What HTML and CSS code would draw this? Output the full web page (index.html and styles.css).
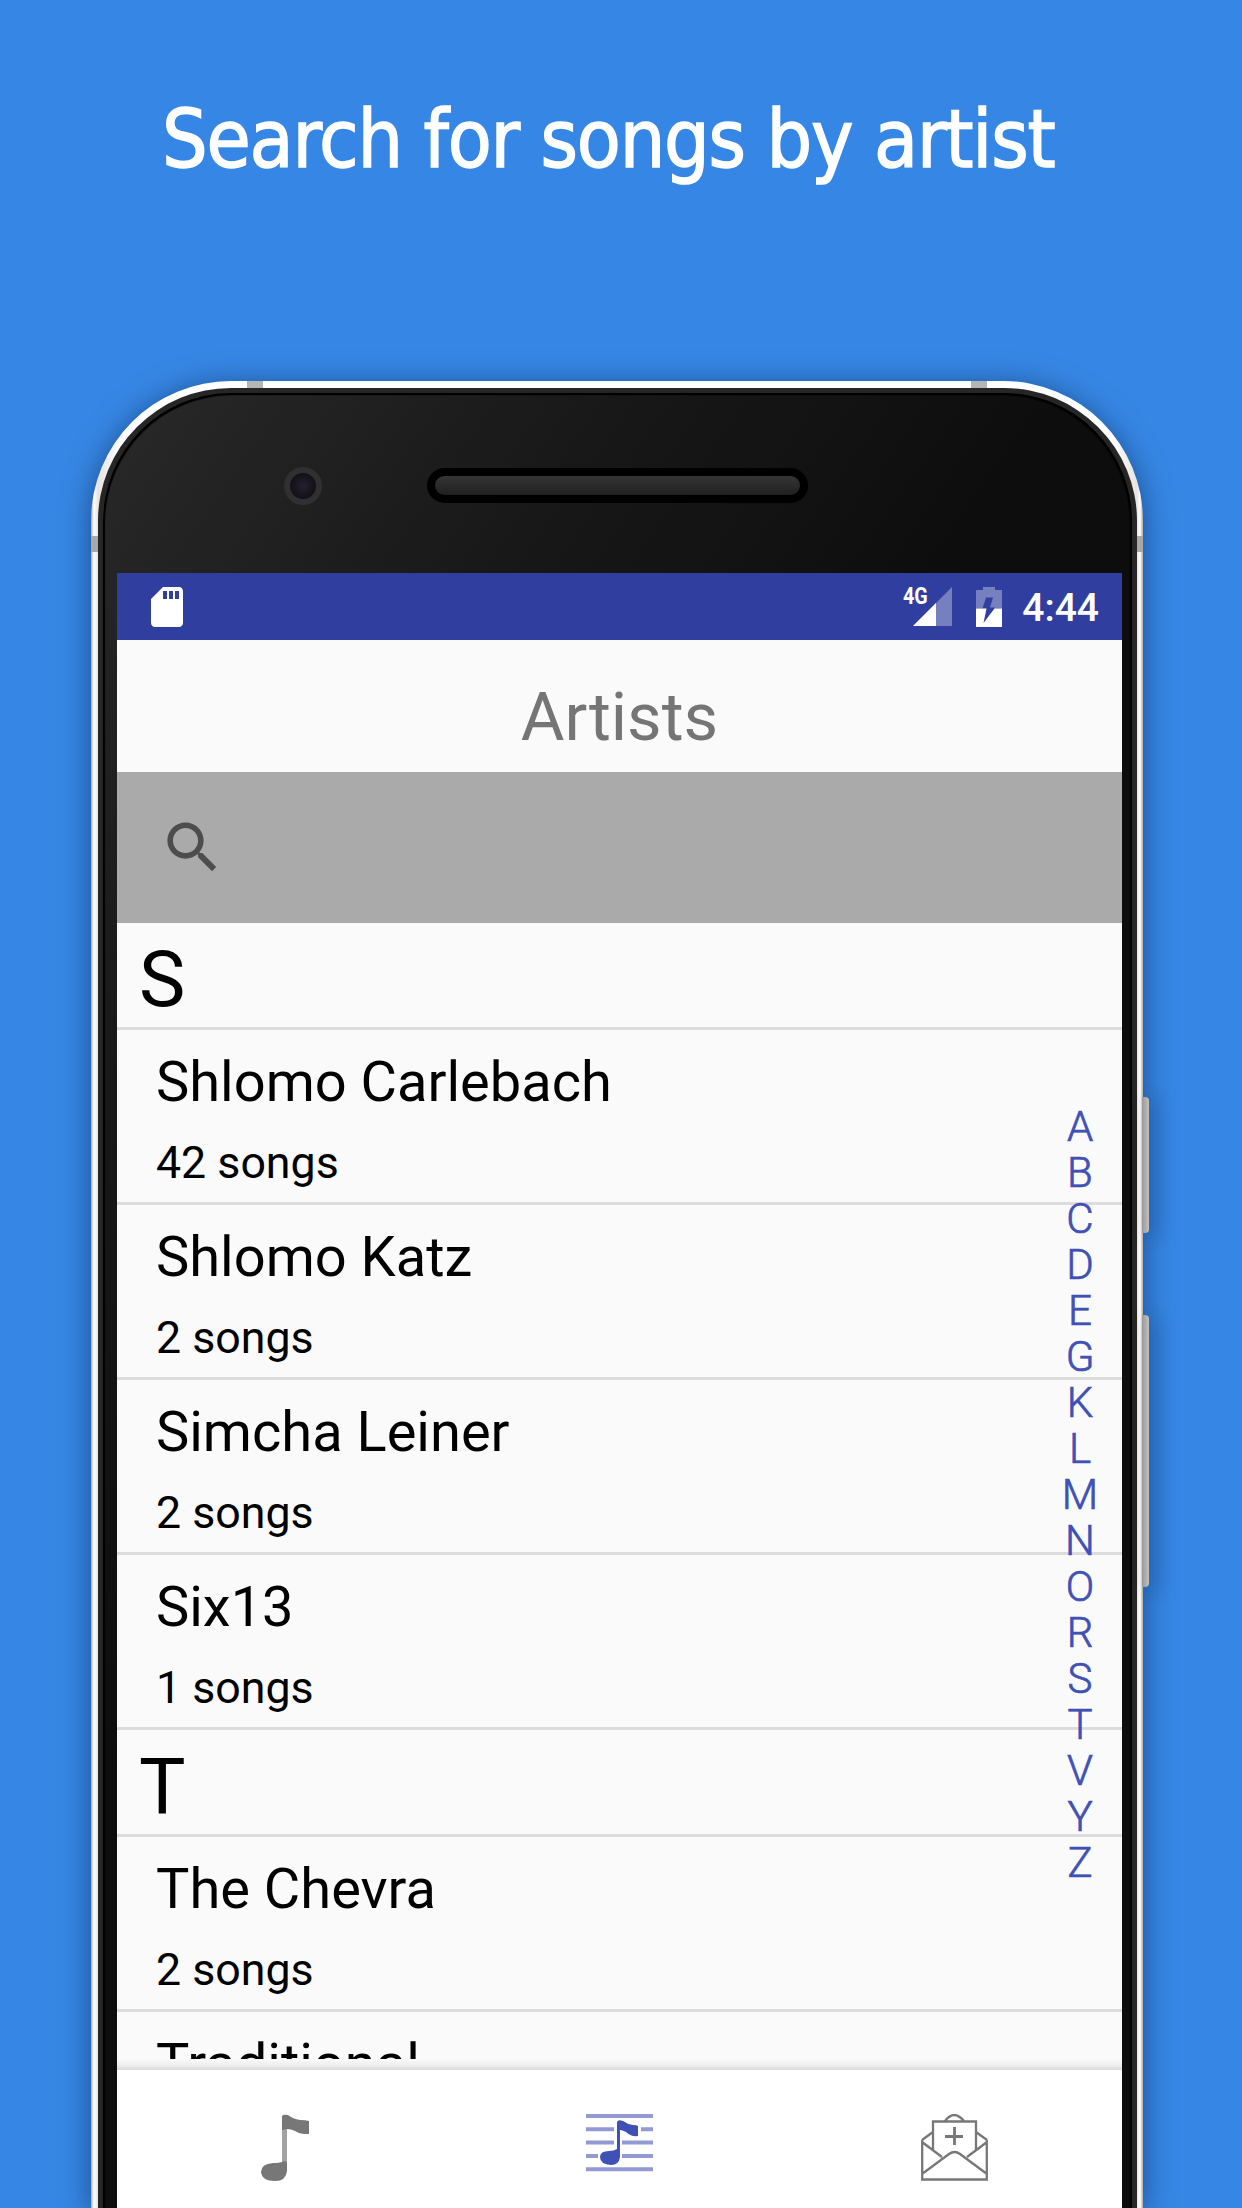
FILE: index.html
```html
<!DOCTYPE html>
<html lang="en">
<head>
    <meta charset="UTF-8">
    <meta name="viewport" content="width=device-width, initial-scale=1.0">
    <title>Search for songs by artist</title>
    <link rel="stylesheet" href="styles.css">
</head>
<body>
    <h1 class="headline">Search for songs by artist</h1>

    <div class="phone">
        <div class="side-button power"></div>
        <div class="side-button volume"></div>

        <div class="bezel">
            <div class="bezel-top">
                <div class="camera"></div>
                <div class="earpiece"></div>
            </div>

            <div class="screen">
                <!-- Android status bar -->
                <div class="status-bar">
                    <svg class="sd-icon" viewBox="0 0 24 24"><path fill="#fff" d="M18 2h-8L4 8v12c0 1.100.9 2 2 2h12c1.100 0 2-.9 2-2V4c0-1.100-.9-2-2-2zm-6 6h-2V4h2v4zm3 0h-2V4h2v4zm3 0h-2V4h2v4z"/></svg>
                    <div class="signal">
                        <span class="network">4G</span>
                        <svg class="signal-icon" viewBox="0 0 39 39"><path fill="#fff" fill-opacity=".34" d="M39 0v39H0z"/><path fill="#fff" d="M23 16v23H0z"/></svg>
                    </div>
                    <svg class="battery-icon" viewBox="0 0 26 40">
                        <path fill="#fff" fill-opacity=".34" d="M7 0h12v3h7v18.500h-7.500l.5-1h-5l3-10H10L6.500 21.500H0V3h7z"/>
                        <path fill="#fff" d="M0 21.500h10.500L7.500 36 18.500 21.500H26V40H0z"/>
                    </svg>
                    <span class="clock">4:44</span>
                </div>

                <div class="title-bar">Artists</div>

                <div class="search-bar">
                    <svg class="search-icon" viewBox="0 0 24 24"><path fill="#4d4d4d" d="M15.500 14h-.79l-.28-.27C15.410 12.590 16 11.110 16 9.500 16 5.910 13.090 3 9.500 3S3 5.910 3 9.500 5.910 16 9.500 16c1.610 0 3.090-.59 4.230-1.570l.27.28v.79l5 4.990L20.490 19l-4.990-5zm-6 0C7.010 14 5 11.990 5 9.500S7.010 5 9.500 5 14 7.010 14 9.500 11.990 14 9.500 14z"/></svg>
                </div>

                <div class="list-area">
                    <div class="artist-list">
                        <div class="section">S</div>
                        <div class="artist">
                            <div class="artist-name">Shlomo Carlebach</div>
                            <div class="song-count">42 songs</div>
                        </div>
                        <div class="artist">
                            <div class="artist-name">Shlomo Katz</div>
                            <div class="song-count">2 songs</div>
                        </div>
                        <div class="artist">
                            <div class="artist-name">Simcha Leiner</div>
                            <div class="song-count">2 songs</div>
                        </div>
                        <div class="artist">
                            <div class="artist-name">Six13</div>
                            <div class="song-count">1 songs</div>
                        </div>
                        <div class="section">T</div>
                        <div class="artist">
                            <div class="artist-name">The Chevra</div>
                            <div class="song-count">2 songs</div>
                        </div>
                        <div class="artist">
                            <div class="artist-name">Traditional</div>
                        </div>
                    </div>

                    <div class="alphabet">
                        <span>A</span>
                        <span>B</span>
                        <span>C</span>
                        <span>D</span>
                        <span>E</span>
                        <span>G</span>
                        <span>K</span>
                        <span>L</span>
                        <span>M</span>
                        <span>N</span>
                        <span>O</span>
                        <span>R</span>
                        <span>S</span>
                        <span>T</span>
                        <span>V</span>
                        <span>Y</span>
                        <span>Z</span>
                    </div>
                </div>

                <div class="nav-shadow"></div>
                <div class="bottom-nav">
                    <div class="nav-item">
                        <svg viewBox="-10 0 67 67">
                            <path fill="#a3a3a3" d="M21 2h5v54h-5z"/>
                            <path fill="#777" d="M21 2q1-2 6-1 5 4 12 5 6 0 9 1v13h-5q-5 0-9-3-4-2-8-2l-5 1zM26 48v9q-1 10-12 10Q1 67 0 58q0-8 12-9 8 0 11-2z"/>
                        </svg>
                    </div>
                    <div class="nav-item">
                        <svg viewBox="0 0 67 67">
                            <path stroke="#9299d3" stroke-width="4" d="M0 2h67M0 15.300h28M55 15.300h12M0 28.600h28M36 28.600h31M0 42h12M36 42h31M0 55.300h67"/>
                            <path fill="#3f51b5" d="M31 8q1-3 6-1 4 3 10 4 4 0 5 1v10q-7 1-12-4-4-2-6-2v27q-1 8-9 8-11-1-11-8 0-6 9-6 5 0 8-2z"/>
                        </svg>
                    </div>
                    <div class="nav-item">
                        <svg viewBox="0 0 67 67" fill="none" stroke="#777" stroke-width="2.300">
                            <path d="M1.200 26v39.500h64.600V26M12 37V7.500h43V37M1 28l20 15M66 28L46 43M1 60l27-20q5.500-4 11 0l27 20M12 18L1 26M55 18l11 8M24 7q9-12 19 0"/>
                            <path stroke-width="2.800" d="M33.500 13v18M24 22.500h18"/>
                        </svg>
                    </div>
                </div>
            </div>
        </div>
    </div>
</body>
</html>
```

FILE: styles.css
```css
:root {
    --background: #3687e5;
    --status-color: #303f9f;
    --accent-color: #3f51b5;
    --screen-bg: #fafafa;
    --divider: #dcdcdc;
}

* {
    margin: 0;
    padding: 0;
    box-sizing: border-box;
}

body {
    width: 1242px;
    height: 2208px;
    overflow: hidden;
    background-color: var(--background);
    font-family: Roboto, sans-serif;
    color: #000;
}

.headline {
    height: 381px;
    padding: 93px 0 0 162px;
    font-family: "DejaVu Sans Condensed", "DejaVu Sans", sans-serif;
    font-stretch: condensed;
    font-size: 80px;
    font-weight: 400;
    line-height: 94px;
    letter-spacing: -1.200px;
    white-space: nowrap;
    color: #fff;
    -webkit-text-stroke: 1.400px #fff;
}

/* Phone frame */
.phone {
    position: relative;
    width: 1052px;
    height: 1827px;
    margin-left: 91px;
    padding: 7px 6px 0 7px;
    border-radius: 140px 140px 0 0;
    background:
        linear-gradient(#b5b5b5, #b5b5b5) 156px 0 / 16px 7px no-repeat,
        linear-gradient(#b5b5b5, #b5b5b5) 880px 0 / 16px 7px no-repeat,
        linear-gradient(#a8a8a8, #a8a8a8) 0 155px / 100% 16px no-repeat,
        linear-gradient(90deg, #aaa, #fff 3px, #e8e3e0 7px, #fff 30px, #fff 1020px, #e8e3e0 1046px, #fff 1049px, #aaa);
    box-shadow: 0 4px 30px rgba(0, 20, 50, 0.5);
}

.side-button {
    position: absolute;
    left: 1051px;
    width: 7px;
    border-radius: 0 4px 4px 0;
    background: linear-gradient(90deg, #999, #c4c2c0);
    box-shadow: 8px 3px 18px rgba(0, 20, 50, 0.3);
}

.power {
    top: 716px;
    height: 136px;
}

.volume {
    top: 934px;
    height: 272px;
}

.bezel {
    height: 100%;
    padding: 0 10px 0 14px;
    border: 5px solid #262626;
    border-bottom: 0;
    border-radius: 133px 133px 0 0;
    background: linear-gradient(125deg, #292929 0, #181818 420px, #0d0d0d 800px);
    box-shadow: inset 2px 2px 1px #000, inset -2px 2px 1px #000;
}

.bezel-top {
    display: flex;
    align-items: center;
    height: 180px;
    padding: 5px 0 0 167px;
}

.camera {
    width: 38px;
    height: 38px;
    border: 6px solid #303030;
    border-radius: 50%;
    background: radial-gradient(#252030, #15121b 60%, #0b0a0e);
}

.earpiece {
    width: 381px;
    height: 35px;
    margin-left: 105px;
    border: 8px solid #000;
    border-radius: 18px;
    background: linear-gradient(#353535, #202020);
}

/* App */
.screen {
    width: 1005px;
    background-color: var(--screen-bg);
}

.status-bar {
    display: flex;
    align-items: center;
    height: 67px;
    padding: 0 23px 0 26px;
    background-color: var(--status-color);
    color: #fff;
}

.sd-icon {
    width: 48px;
    height: 48px;
    margin-right: auto;
}

.signal {
    display: flex;
    align-items: flex-start;
    height: 39px;
    margin-right: 24px;
}

.network {
    width: 24px;
    margin-right: -14px;
    font-size: 24px;
    font-weight: 700;
    line-height: 19px;
    transform: scaleX(0.82);
    transform-origin: left;
}

.signal-icon {
    width: 39px;
    height: 39px;
}

.battery-icon {
    width: 26px;
    height: 40px;
    margin-right: 20px;
}

.clock {
    padding-top: 2px;
    font-size: 39px;
    font-weight: 500;
    line-height: 40px;
}

.title-bar {
    height: 132px;
    padding-top: 45px;
    font-size: 67px;
    line-height: 65px;
    text-align: center;
    color: #757575;
}

.search-bar {
    height: 151px;
    padding: 42px 0 0 42px;
    background-color: #aaa;
}

.search-icon {
    display: block;
    width: 67px;
    height: 67px;
}

.list-area {
    position: relative;
    height: 1136px;
}

.artist-list {
    height: 100%;
    overflow: hidden;
}

.section {
    height: 107px;
    padding: 18px 0 0 22px;
    border-bottom: 3px solid var(--divider);
    font-size: 78px;
    line-height: 78px;
}

.artist {
    height: 175px;
    padding: 24px 0 0 39px;
    border-bottom: 3px solid var(--divider);
}

.artist-name {
    font-size: 56px;
    line-height: 56px;
}

.song-count {
    margin-top: 31px;
    font-size: 44.700px;
    line-height: 44px;
}

.alphabet {
    position: absolute;
    top: 181px;
    right: 18px;
    width: 48px;
    display: flex;
    flex-direction: column;
    font-size: 42px;
    font-weight: 300;
    line-height: 46px;
    text-align: center;
    color: var(--accent-color);
    -webkit-text-stroke: 0.700px var(--accent-color);
}

.nav-shadow {
    height: 11px;
    background: linear-gradient(#fafafa, #ededed 60%, #d9d9d9);
}

.bottom-nav {
    display: grid;
    grid-template-columns: repeat(3, 1fr);
    height: 138px;
    padding-top: 44px;
    background-color: #fff;
}

.nav-item {
    display: flex;
    justify-content: center;
}

.nav-item svg {
    width: 67px;
    height: 67px;
}
```
